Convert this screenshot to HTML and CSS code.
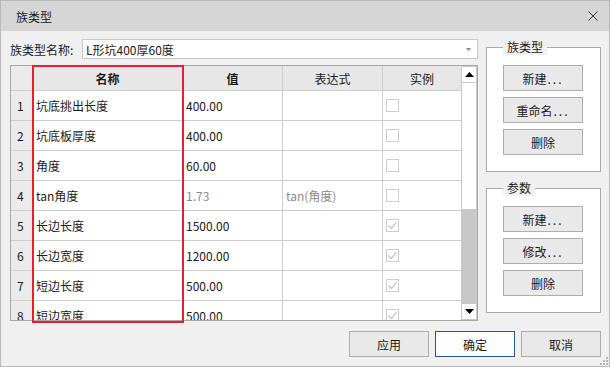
FILE: index.html
```html
<!DOCTYPE html>
<html lang="zh-CN">
<head>
    <meta charset="UTF-8">
    <title>族类型</title>
    <link rel="stylesheet" href="styles.css">
</head>
<body>
    <div class="dialog">
        <header class="titlebar">
            <span class="title">族类型</span>
            <svg class="close" width="10" height="10" viewBox="0 0 10 10">
                <path d="M0.5 0.5 L9.5 9.5 M9.5 0.5 L0.5 9.5" stroke="#333" stroke-width="1"/>
            </svg>
        </header>

        <div class="dialog-body">
            <div class="main">
                <div class="left">
                    <div class="name-row">
                        <label class="name-label">族类型名称:</label>
                        <div class="combo">
                            <span>L形坑400厚60度</span>
                            <svg width="5" height="3" viewBox="0 0 5 3"><path d="M0 0 H5 L2.5 3 Z" fill="#8a8a8a"/></svg>
                        </div>
                    </div>

                    <div class="grid-wrap">
                        <div class="grid">
                            <div class="cell head num"></div>
                            <div class="cell head bold">名称</div>
                            <div class="cell head bold">值</div>
                            <div class="cell head">表达式</div>
                            <div class="cell head last">实例</div>

                            <div class="cell num">1</div>
                            <div class="cell">坑底挑出长度</div>
                            <div class="cell">400.00</div>
                            <div class="cell"></div>
                            <div class="cell last"><span class="check"></span></div>

                            <div class="cell num">2</div>
                            <div class="cell">坑底板厚度</div>
                            <div class="cell">400.00</div>
                            <div class="cell"></div>
                            <div class="cell last"><span class="check"></span></div>

                            <div class="cell num">3</div>
                            <div class="cell">角度</div>
                            <div class="cell">60.00</div>
                            <div class="cell"></div>
                            <div class="cell last"><span class="check"></span></div>

                            <div class="cell num">4</div>
                            <div class="cell">tan角度</div>
                            <div class="cell muted">1.73</div>
                            <div class="cell muted">tan(角度)</div>
                            <div class="cell last"><span class="check"></span></div>

                            <div class="cell num">5</div>
                            <div class="cell">长边长度</div>
                            <div class="cell">1500.00</div>
                            <div class="cell"></div>
                            <div class="cell last"><span class="check checked"><svg width="11" height="11" viewBox="0 0 11 11"><path d="M1.5 5.5 L4.5 8.5 L9.5 2" fill="none" stroke="#c2c2c2" stroke-width="1.2"/></svg></span></div>

                            <div class="cell num">6</div>
                            <div class="cell">长边宽度</div>
                            <div class="cell">1200.00</div>
                            <div class="cell"></div>
                            <div class="cell last"><span class="check checked"><svg width="11" height="11" viewBox="0 0 11 11"><path d="M1.5 5.5 L4.5 8.5 L9.5 2" fill="none" stroke="#c2c2c2" stroke-width="1.2"/></svg></span></div>

                            <div class="cell num">7</div>
                            <div class="cell">短边长度</div>
                            <div class="cell">500.00</div>
                            <div class="cell"></div>
                            <div class="cell last"><span class="check checked"><svg width="11" height="11" viewBox="0 0 11 11"><path d="M1.5 5.5 L4.5 8.5 L9.5 2" fill="none" stroke="#c2c2c2" stroke-width="1.2"/></svg></span></div>

                            <div class="cell num">8</div>
                            <div class="cell">短边宽度</div>
                            <div class="cell">500.00</div>
                            <div class="cell"></div>
                            <div class="cell last"><span class="check checked"><svg width="11" height="11" viewBox="0 0 11 11"><path d="M1.5 5.5 L4.5 8.5 L9.5 2" fill="none" stroke="#c2c2c2" stroke-width="1.2"/></svg></span></div>
                        </div>

                        <div class="scrollbar">
                            <div class="sb-btn"><svg width="9" height="5" viewBox="0 0 9 5"><path d="M0 5 L4.5 0 L9 5 Z" fill="#000"/></svg></div>
                            <div class="sb-thumb"></div>
                            <div class="sb-track"></div>
                            <div class="sb-btn"><svg width="9" height="5" viewBox="0 0 9 5"><path d="M0 0 L9 0 L4.5 5 Z" fill="#000"/></svg></div>
                        </div>

                        <!-- highlight around the name column -->
                        <div class="highlight"></div>
                    </div>
                </div>

                <div class="side">
                    <fieldset class="group">
                        <legend>族类型</legend>
                        <button class="btn">新建<span class="dots">...</span></button>
                        <button class="btn">重命名<span class="dots">...</span></button>
                        <button class="btn">删除</button>
                    </fieldset>
                    <fieldset class="group">
                        <legend>参数</legend>
                        <button class="btn">新建<span class="dots">...</span></button>
                        <button class="btn">修改<span class="dots">...</span></button>
                        <button class="btn">删除</button>
                    </fieldset>
                </div>
            </div>

            <div class="footer">
                <button class="btn">应用</button>
                <button class="btn btn-primary">确定</button>
                <button class="btn">取消</button>
            </div>
        </div>

        <svg class="grip" width="8" height="8" viewBox="0 0 8 8">
            <rect x="6" y="0" width="2" height="2" fill="#b5b5b5"/>
            <rect x="3" y="3" width="2" height="2" fill="#b5b5b5"/>
            <rect x="6" y="3" width="2" height="2" fill="#b5b5b5"/>
            <rect x="0" y="6" width="2" height="2" fill="#b5b5b5"/>
            <rect x="3" y="6" width="2" height="2" fill="#b5b5b5"/>
            <rect x="6" y="6" width="2" height="2" fill="#b5b5b5"/>
        </svg>
    </div>
</body>
</html>
```

FILE: styles.css
```css
:root {
    --text-color: #1a1a1a;
    --muted-color: #8a8a8a;
    --bg-color: #f0f0f0;
    --title-bg: #d6d6d6;
    --grid-line: #cdcdcd;
    --head-bg: #e7e7e7;
    --btn-bg: #e9e9e9;
    --btn-border: #adadad;
    --accent: #e8202a;
}

* {
    box-sizing: border-box;
}

body {
    margin: 0;
    font-family: "Noto Sans CJK SC", "Microsoft YaHei", sans-serif;
    font-size: 12px;
    color: var(--text-color);
    background: #ffffff;
}

.dialog {
    position: relative;
    width: 610px;
    height: 367px;
    border: 1px solid #b9b9b9;
    background: var(--bg-color);
    display: flex;
    flex-direction: column;
}

.titlebar {
    height: 30px;
    background: var(--title-bg);
    display: flex;
    align-items: center;
    justify-content: space-between;
    padding: 0 11px 0 15px;
}

.dialog-body {
    flex: 1;
    padding: 8px 8px 9px 9px;
    display: flex;
    flex-direction: column;
}

.main {
    display: flex;
    gap: 8px;
}

.left {
    width: 468px;
    display: flex;
    flex-direction: column;
    gap: 6px;
}

.name-row {
    display: flex;
    align-items: center;
    height: 20px;
}

.name-label {
    width: 72px;
}

.combo {
    flex: 1;
    height: 20px;
    border: 1px solid #c9c9c9;
    background: #ffffff;
    display: flex;
    align-items: center;
    justify-content: space-between;
    padding: 0 6px 0 3px;
}

.grid-wrap {
    position: relative;
    height: 256px;
    border: 1px solid #a8a8a8;
    background: #ffffff;
    display: flex;
}

.grid {
    flex: 1;
    overflow: hidden;
    display: grid;
    grid-template-columns: 22px 150px 100px 100px 78px;
    grid-template-rows: 25px;
    grid-auto-rows: 30px;
    align-content: start;
}

.cell {
    border-right: 1px solid var(--grid-line);
    border-bottom: 1px solid var(--grid-line);
    display: flex;
    align-items: center;
    padding-left: 3px;
    white-space: nowrap;
    overflow: hidden;
}

.cell.last {
    border-right: none;
}

.cell.head {
    background: var(--head-bg);
    justify-content: center;
    padding-left: 0;
}

.cell.bold {
    font-weight: 700;
}

.cell.num {
    background: #ebebeb;
    padding-left: 6px;
}

.cell.muted {
    color: var(--muted-color);
}

.check {
    width: 13px;
    height: 13px;
    border: 1px solid #cccccc;
    background: #ffffff;
    display: flex;
    align-items: center;
    justify-content: center;
}

.scrollbar {
    width: 16px;
    background: #c8c8c8;
    padding: 1px;
    display: flex;
    flex-direction: column;
    gap: 1px;
}

.sb-btn {
    height: 15px;
    background: #ffffff;
    display: flex;
    align-items: center;
    justify-content: center;
}

.sb-thumb {
    height: 126px;
    background: #ffffff;
}

.sb-track {
    flex: 1;
}

.highlight {
    position: absolute;
    left: 21px;
    top: -1px;
    width: 152px;
    height: 258px;
    border: 2px solid var(--accent);
    pointer-events: none;
}

.side {
    flex: 1;
    display: flex;
    flex-direction: column;
    gap: 8px;
}

.group {
    margin: 0;
    min-width: 0;
    border: 1px solid #a9a9a9;
    background: #ffffff;
    padding: 10px 16px 16px;
    display: flex;
    flex-direction: column;
    gap: 6px;
}

.group legend {
    padding: 0 4px;
    line-height: 16px;
    background: var(--bg-color);
}

.btn {
    width: 80px;
    height: 26px;
    border: 1px solid var(--btn-border);
    background: var(--btn-bg);
    color: var(--text-color);
    font: inherit;
    padding: 0;
}

.dots {
    letter-spacing: 2px;
    margin-left: 1px;
}

.btn-primary {
    background: #fdfdfd;
    border-color: #2b5592;
}

.footer {
    margin-top: 10px;
    display: flex;
    justify-content: flex-end;
    gap: 6px;
}

.grip {
    position: absolute;
    right: 1px;
    bottom: 1px;
}
```
